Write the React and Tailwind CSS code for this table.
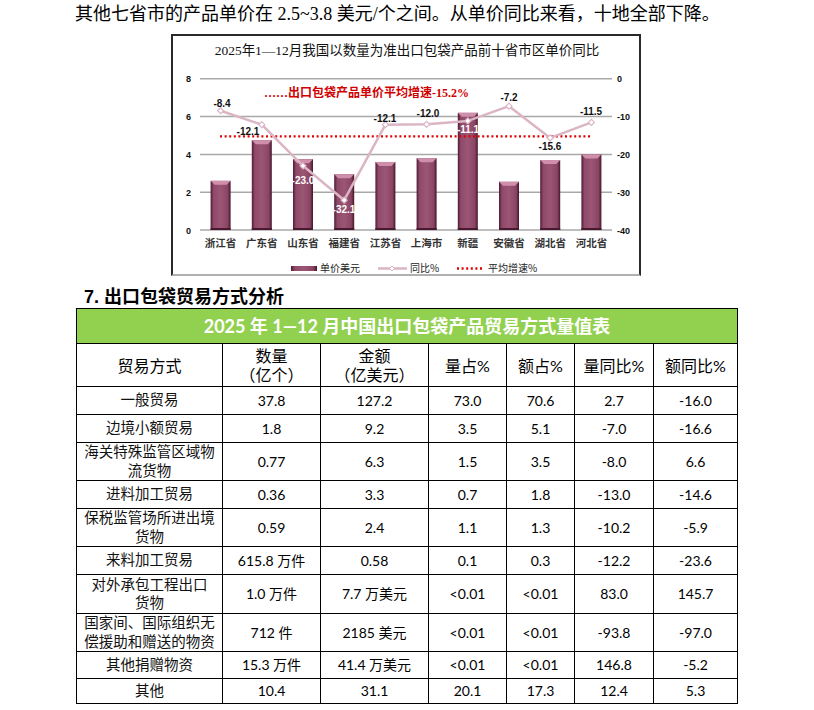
import React from "react";

const provinces = ["浙江省", "广东省", "山东省", "福建省", "江苏省", "上海市", "新疆", "安徽省", "湖北省", "河北省"];
const prices = [2.6, 4.75, 3.75, 2.95, 3.6, 3.8, 6.2, 2.55, 3.7, 4.0];
const yoy = [-8.4, -12.1, -23.0, -32.1, -12.1, -12.0, -11.1, -7.2, -15.6, -11.5];
// label spots [x, y, white?]
const labelPos = [
  [222, 103, false],
  [248, 131, false],
  [303, 180, true],
  [344, 209, true],
  [385, 118, false],
  [428, 113, false],
  [468, 129, true],
  [509, 97, false],
  [550, 146, false],
  [591, 111, false],
];

const cx = (i) => 200 + 41.2 * (i + 0.5);
const yBar = (v) => 230 - v * 18.9;
const yPct = (p) => 79 - p * 3.775;

const rows = [
  { name: ["一般贸易"], v: ["37.8", "127.2", "73.0", "70.6", "2.7", "-16.0"], h: "h-[28px]" },
  { name: ["边境小额贸易"], v: ["1.8", "9.2", "3.5", "5.1", "-7.0", "-16.6"], h: "h-[28px]" },
  { name: ["海关特殊监管区域物", "流货物"], v: ["0.77", "6.3", "1.5", "3.5", "-8.0", "6.6"], h: "h-[38px]" },
  { name: ["进料加工贸易"], v: ["0.36", "3.3", "0.7", "1.8", "-13.0", "-14.6"], h: "h-[28px]" },
  { name: ["保税监管场所进出境", "货物"], v: ["0.59", "2.4", "1.1", "1.3", "-10.2", "-5.9"], h: "h-[38px]" },
  { name: ["来料加工贸易"], v: ["615.8 万件", "0.58", "0.1", "0.3", "-12.2", "-23.6"], h: "h-[28px]" },
  { name: ["对外承包工程出口", "货物"], v: ["1.0 万件", "7.7 万美元", "<0.01", "<0.01", "83.0", "145.7"], h: "h-[39px]" },
  { name: ["国家间、国际组织无", "偿援助和赠送的物资"], v: ["712 件", "2185 美元", "<0.01", "<0.01", "-93.8", "-97.0"], h: "h-[38px]" },
  { name: ["其他捐赠物资"], v: ["15.3 万件", "41.4 万美元", "<0.01", "<0.01", "146.8", "-5.2"], h: "h-[27px]" },
  { name: ["其他"], v: ["10.4", "31.1", "20.1", "17.3", "12.4", "5.3"], h: "h-[25px]" },
];

const Bar = ({ i, v }) => {
  const x = cx(i) - 10;
  const top = yBar(v);
  return (
    <g>
      <rect x={x} y={top} width={20} height={230 - top} fill="url(#barGrad)" />
      <polygon points={`${x},${top} ${x + 20},${top} ${x + 16},${top + 4} ${x + 4},${top + 4}`} fill="#cf8fab" />
      <rect x={x} y={228} width={20} height={2} fill="#4a1830" />
    </g>
  );
};

const Chart = () => {
  const pts = yoy.map((p, i) => `${cx(i)},${yPct(p)}`).join(" ");
  return (
    <svg width="466" height="238" viewBox="173 36 466 238" className="block">
      <defs>
        <linearGradient id="barGrad" x1="0" x2="1" y1="0" y2="0">
          <stop offset="0" stopColor="#4f1a34" />
          <stop offset="0.15" stopColor="#8f4a69" />
          <stop offset="0.5" stopColor="#9b5575" />
          <stop offset="0.85" stopColor="#8a4564" />
          <stop offset="1" stopColor="#461629" />
        </linearGradient>
      </defs>
      <text x="407" y="55" textAnchor="middle" fontSize="13.5" fill="#111" fontFamily="'Liberation Serif','Noto Sans CJK SC',serif">
        2025年1—12月我国以数量为准出口包袋产品前十省市区单价同比
      </text>
      {[0, 2, 4, 6, 8].map((v) => (
        <g key={v}>
          <line x1="200" x2="612" y1={yBar(v)} y2={yBar(v)} stroke="#a9a9a9" strokeWidth="1.5" />
          <text x="191" y={yBar(v) + 3.5} textAnchor="end" fontSize="9" fontWeight="bold" fill="#111" fontFamily="'Liberation Sans',sans-serif">
            {v}
          </text>
          <text x="617" y={yBar(v) + 3.5} fontSize="9" fontWeight="bold" fill="#111" fontFamily="'Liberation Sans',sans-serif">
            {v === 8 ? "0" : String(-(8 - v) * 5)}
          </text>
        </g>
      ))}
      {prices.map((v, i) => (
        <Bar key={i} i={i} v={v} />
      ))}
      <text x="264" y="96.5" fontSize="12" fontWeight="bold" fill="#d00000" fontFamily="'Liberation Serif','Noto Sans CJK SC',serif">
        ……出口包袋产品单价平均增速-15.2%
      </text>
      <line x1="220" x2="592" y1={yPct(-15.2)} y2={yPct(-15.2)} stroke="#e00000" strokeWidth="2.4" strokeDasharray="2 2.6" />
      <polyline points={pts} fill="none" stroke="#dcb5c5" strokeWidth="2.5" strokeLinejoin="round" />
      {yoy.map((p, i) => (
        <polygon
          key={i}
          points={`${cx(i)},${yPct(p) - 3} ${cx(i) + 3},${yPct(p)} ${cx(i)},${yPct(p) + 3} ${cx(i) - 3},${yPct(p)}`}
          fill="#fff"
          stroke="#dcb5c5"
          strokeWidth="1.2"
        />
      ))}
      {yoy.map((p, i) => (
        <text
          key={i}
          x={labelPos[i][0]}
          y={labelPos[i][1] + 3.5}
          textAnchor="middle"
          fontSize="10"
          fontWeight="bold"
          fill={labelPos[i][2] ? "#fff" : "#111"}
          fontFamily="'Liberation Sans',sans-serif"
        >
          {p.toFixed(1)}
        </text>
      ))}
      {provinces.map((n, i) => (
        <text key={n} x={cx(i)} y="247" textAnchor="middle" fontSize="10.5" fontWeight="bold" fill="#333" fontFamily="'Noto Sans CJK SC',sans-serif">
          {n}
        </text>
      ))}
      {/* legend */}
      <rect x="291" y="266" width="26" height="5" fill="url(#barGrad)" />
      <text x="320" y="272" fontSize="10" fill="#222" fontFamily="'Noto Sans CJK SC',sans-serif">单价美元</text>
      <line x1="378" x2="407" y1="268.5" y2="268.5" stroke="#dcb5c5" strokeWidth="2.5" />
      <polygon points="392,266 394.5,268.5 392,271 389.5,268.5" fill="#fff" stroke="#dcb5c5" strokeWidth="1" />
      <text x="410" y="272" fontSize="10" fill="#222" fontFamily="'Noto Sans CJK SC',sans-serif">同比%</text>
      <line x1="457" x2="483" y1="268.5" y2="268.5" stroke="#e00000" strokeWidth="2.4" strokeDasharray="2 2.6" />
      <text x="488" y="272" fontSize="10" fill="#222" fontFamily="'Noto Sans CJK SC',sans-serif">平均增速%</text>
    </svg>
  );
};

const App = () => {
  return (
    <div className="w-[814px] h-[710px] bg-white overflow-hidden text-black">
      <p className="pl-[75px] pt-[2px] text-[18px] leading-[24px] font-['Liberation_Serif','Noto_Sans_CJK_SC',serif]">
        其他七省市的产品单价在 2.5~3.8 美元/个之间。从单价同比来看，十地全部下降。
      </p>
      <div className="ml-[171px] mt-[8px] w-[470px] h-[242px] border-2 border-[#2a2a2a] border-b-[#b0b0b0]">
        <Chart />
      </div>
      <h2 className="ml-[84px] mt-[10px] text-[18px] leading-[22px] font-bold font-['Liberation_Sans','Noto_Sans_CJK_SC',sans-serif]">
        7. 出口包袋贸易方式分析
      </h2>
      <table className="ml-[76px] w-[661px] border-collapse table-fixed font-['Lato','Noto_Sans_CJK_SC',sans-serif]">
        <colgroup>
          <col className="w-[146px]" />
          <col className="w-[98px]" />
          <col className="w-[108px]" />
          <col className="w-[78px]" />
          <col className="w-[68px]" />
          <col className="w-[79px]" />
          <col className="w-[84px]" />
        </colgroup>
        <thead>
          <tr>
            <th colSpan={7} className="h-[35px] bg-[#92d050] border border-black text-white text-[18px] font-bold leading-none">
              2025 年 1—12 月中国出口包袋产品贸易方式量值表
            </th>
          </tr>
          <tr className="text-[16px] font-normal leading-[19px]">
            <th className="h-[43px] border border-black font-normal">贸易方式</th>
            <th className="border border-black font-normal">
              数量
              <br />
              （亿个）
            </th>
            <th className="border border-black font-normal">
              金额
              <br />
              （亿美元）
            </th>
            <th className="border border-black font-normal">量占%</th>
            <th className="border border-black font-normal">额占%</th>
            <th className="border border-black font-normal">量同比%</th>
            <th className="border border-black font-normal">额同比%</th>
          </tr>
        </thead>
        <tbody>
          {rows.map((r, idx) => (
            <tr key={idx} className="text-center">
              <td className={`${r.h} border border-black p-0 text-[14.5px] leading-[18.5px] text-[#111]`}>
                {r.name.map((l, k) => (
                  <div key={k}>{l}</div>
                ))}
              </td>
              {r.v.map((v, k) => (
                <td key={k} className="border border-black p-0 text-[14px] leading-[18px]">
                  {v}
                </td>
              ))}
            </tr>
          ))}
        </tbody>
      </table>
    </div>
  );
};

export default App;
